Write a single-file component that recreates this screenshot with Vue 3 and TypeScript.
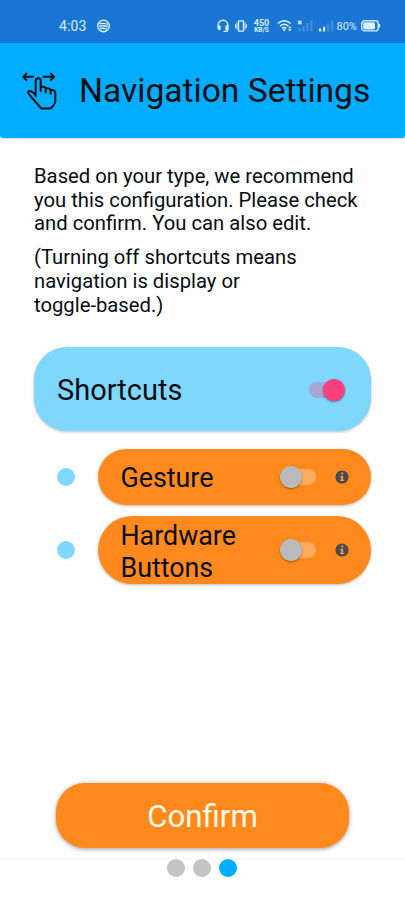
<script setup lang="ts">
import { ref } from 'vue'

interface Option {
  label: string
  enabled: boolean
}

const shortcuts = ref<boolean>(true)
const options = ref<Option[]>([
  { label: 'Gesture', enabled: false },
  { label: 'Hardware Buttons', enabled: false },
])
const steps = 3
const currentStep = ref<number>(3)
</script>

<template>
  <div class="screen">
    <div class="status">
      <span class="clock">4:03</span>
      <svg class="spotify" width="14" height="14" viewBox="0 0 14 14">
        <circle cx="6.5" cy="7" r="5.8" />
        <path d="M2.2 4.8q4-1.1 8.8 .5M2.2 7.2q4.2-1 8.6.5M2.8 9.5q3.6-.8 7.2.4" />
      </svg>
      <svg class="headset" width="12" height="14" viewBox="0 0 12 14">
        <path d="M1.2 9V6a4.8 4.8 0 0 1 9.6 0v4.2q0 2.2-2.3 2.2H6.5" />
        <path class="fill" d="M.6 6.6h3v4.3H2q-1.4 0-1.4-1.4zM8.4 6.6h3v2.9q0 1.4-1.4 1.4H8.4z" />
      </svg>
      <svg class="vibrate" width="12" height="12" viewBox="0 0 12 12">
        <rect x="3.5" y=".9" width="5" height="10.2" rx=".5" />
        <path class="thin" d="M1.9 2.5v7M10.1 2.5v7M.4 4v4M11.6 4v4" />
      </svg>
      <span class="speed"><b>450</b><small>KB/S</small></span>
      <svg class="wifi" width="16" height="14" viewBox="0 0 16 14">
        <path d="M.8 4.5q6.4-5.7 12.8 0M3 7.1q4.2-3.6 8.4 0M5 9.4q2.2-1.8 4.4 0" />
        <path class="fill" d="M5.6 10.5q1.6-1.1 3.2 0l-1.6 1.9zM11.1 9.3l1.7-2.2 1.7 2.2zM11.1 10.3h3.4l-1.7 2.2z" />
      </svg>
      <svg class="nosim" width="17" height="14" viewBox="0 0 17 14">
        <path class="cross" d="M1 1.7l3.6 3.6M4.6 1.7L1 5.3" />
        <path class="dim" d="M2.6 9v3.4M6.5 7v5.4M10.5 4v8.4M14.5 1.5v10.9" />
      </svg>
      <svg class="signal" width="17" height="14" viewBox="0 0 17 14">
        <path class="bar" d="M2.1 9.6v2.8M6.1 7.8v4.6" />
        <path class="dim" d="M10.1 4.5v7.9M14.1 1.5v10.9" />
      </svg>
      <span class="percent">80%</span>
      <svg class="battery" width="20" height="12" viewBox="0 0 20 12">
        <rect x=".7" y=".7" width="16.6" height="10.2" rx="3.2" />
        <rect class="fill" x="2.2" y="2.2" width="11.8" height="7.2" rx="1.6" />
        <path d="M18.4 4v3.6" />
      </svg>
    </div>

    <header class="header">
      <svg class="hand" width="36" height="40" viewBox="0 0 36 40">
        <path class="arrows" d="M11.2 5.8H1.5M4.3 2.6L1.2 5.8l3.1 3.2M21.4 5.8h10.4M28.8 2.6L32 5.8 28.8 9" />
        <path d="M13.7 25V9.7q0-2.5 2.5-2.5t2.5 2.5V20M18.7 15.9q5-.8 5 2.1v3.4M23.7 17.5q4.9-.7 4.9 2v3.3M28.6 19.1q4.7-.3 4.7 2.8v8.6q-.2 2.6-3 5.2l-1.8 1.8H19.3L8.5 25.2 6.3 22q-.8-1.8 1.3-2 2-.1 6.1 4" />
      </svg>
      <h1>Navigation Settings</h1>
    </header>

    <main class="content">
      <p>Based on your type, we recommend<br>you this configuration. Please check<br>and confirm. You can also edit.</p>
      <p>(Turning off shortcuts means<br>navigation is display or<br>toggle-based.)</p>

      <section class="card master" @click="shortcuts = !shortcuts">
        <span class="label">Shortcuts</span>
        <span class="switch" :class="{ on: shortcuts }"><i /></span>
      </section>

      <div v-for="option in options" :key="option.label" class="row">
        <span class="bullet" />
        <section class="card option">
          <span class="label">{{ option.label }}</span>
          <span class="switch" :class="{ on: option.enabled }" @click="option.enabled = !option.enabled"><i /></span>
          <svg class="info" width="14" height="14" viewBox="0 0 14 14">
            <circle cx="7" cy="7" r="6.6" />
            <path d="M6.3 2.6h2v2h-2zM5.2 5.7h2.9v4h1v1.4H5.2V9.7h1V7.1h-1z" />
          </svg>
        </section>
      </div>
    </main>

    <button class="confirm" type="button">Confirm</button>
    <footer class="steps">
      <span v-for="n in steps" :key="n" :class="{ active: n === currentStep }" />
    </footer>
  </div>
</template>

<style>
body {
  background: #fefefe;
}
</style>

<style scoped>
.screen {
  display: flex;
  flex-direction: column;
  width: 405px;
  height: 900px;
  overflow: hidden;
  background: #fefefe;
  color: #080d12;
  font-family: Roboto, "Liberation Sans", sans-serif;
}
svg {
  display: block;
  flex: none;
  fill: none;
  stroke: currentColor;
}
.status {
  display: flex;
  flex: none;
  align-items: center;
  box-sizing: border-box;
  height: 43px;
  padding: 9px 0 0 59px;
  background: #1976d4;
  color: #d7f0ff;
}
.status svg {
  stroke-width: 1.4;
}
.status .thin {
  stroke-width: 1;
}
.status .fill {
  fill: currentColor;
  stroke: none;
}
.status .dim {
  opacity: .22;
  stroke-width: 2;
}
.status .bar {
  stroke-width: 2.2;
}
.clock {
  width: 38px;
  font-size: 14px;
  letter-spacing: .15px;
}
.headset {
  margin-left: 106px;
}
.vibrate {
  margin-left: 6px;
}
.speed {
  display: flex;
  flex-direction: column;
  align-items: center;
  width: 17px;
  margin-left: 6px;
}
.speed b {
  font-size: 9px;
  line-height: 8px;
}
.speed small {
  font-size: 6.5px;
  font-weight: 700;
  line-height: 6px;
}
.wifi {
  margin-left: 7px;
}
.nosim {
  margin-left: 4px;
}
.signal {
  margin-left: 4px;
}
.percent {
  width: 24px;
  margin-left: 1.5px;
  font-size: 11px;
}
.header {
  display: flex;
  flex: none;
  align-items: center;
  box-sizing: border-box;
  height: 95px;
  padding-left: 22px;
  border-radius: 0 0 3px 3px;
  background: #02adff;
  box-shadow: 0 1px 1px #0002;
}
.hand {
  stroke-width: 2;
  stroke-linejoin: round;
  stroke-linecap: round;
}
.arrows {
  stroke-width: 1.9;
}
h1 {
  margin: 0 0 0 21px;
  font-size: 33.6px;
  font-weight: 400;
  line-height: 40px;
  white-space: nowrap;
}
.content {
  display: flex;
  flex-direction: column;
  padding: 27px 34px 0;
}
p {
  margin: 0 0 10px;
  font-size: 20.25px;
  line-height: 23.7px;
  white-space: nowrap;
}
.card {
  display: flex;
  align-items: center;
  box-sizing: border-box;
  box-shadow: 0 1px 3px #0004;
}
.label {
  flex: 1;
}
.master {
  height: 84.5px;
  margin-top: 19.3px;
  padding: 2px 26px 0 23px;
  border-radius: 33px;
  background: #80d7fd;
  font-size: 29px;
}
.master .label {
  padding-top: 1px;
}
.row {
  display: flex;
  align-items: center;
  margin-top: 17.5px;
  padding-left: 23px;
}
.row + .row {
  margin-top: 11.5px;
}
.bullet {
  width: 18px;
  height: 18px;
  margin-right: 23px;
  border-radius: 50%;
  background: #80d7fd;
}
.option {
  flex: 1;
  height: 56px;
  padding: 0 22px 0 22.5px;
  border-radius: 34px;
  background: #ff891c;
  font-size: 26.8px;
  line-height: 32px;
}
.row + .row .option {
  height: 68px;
}
.option .label {
  padding-top: 3px;
}
.switch {
  display: flex;
  flex: none;
  align-items: center;
  width: 36px;
  height: 16px;
  border-radius: 8px;
  background: linear-gradient(#ffab5d, #ffab5d) right / 28px 16px no-repeat;
}
.switch i {
  width: 22px;
  height: 22px;
  flex: none;
  border-radius: 50%;
  background: #bababa;
  box-shadow: 0 1px 2px #0006;
}
.switch.on {
  justify-content: flex-end;
  background: linear-gradient(90deg, #a7a6d5, #a7a6d5) left / 28px 16px no-repeat;
}
.switch.on i {
  background: #fb4080;
}
.info {
  margin-left: 19.3px;
}
.info circle {
  fill: #4d4b4a;
  stroke: none;
}
.info path {
  fill: #e99c54;
  stroke: none;
}
.confirm {
  flex: none;
  width: 293px;
  height: 65px;
  margin: auto 0 0 56px;
  padding: 2px 0 0;
  border: 0;
  border-radius: 29px;
  background: #ff891c;
  box-shadow: 0 1px 4px #0006;
  color: #fffbe8;
  font: 400 31.2px Roboto, sans-serif;
}
.steps {
  display: flex;
  flex: none;
  justify-content: center;
  box-sizing: border-box;
  height: 42.5px;
  margin-top: 10px;
  padding: .5px 1px 0 0;
  gap: 8px;
  border-top: 1px solid #f8f8f8;
}
.steps span {
  width: 18px;
  height: 18px;
  border-radius: 50%;
  background: #c3c3c3;
}
.steps .active {
  background: #02adff;
}
</style>
